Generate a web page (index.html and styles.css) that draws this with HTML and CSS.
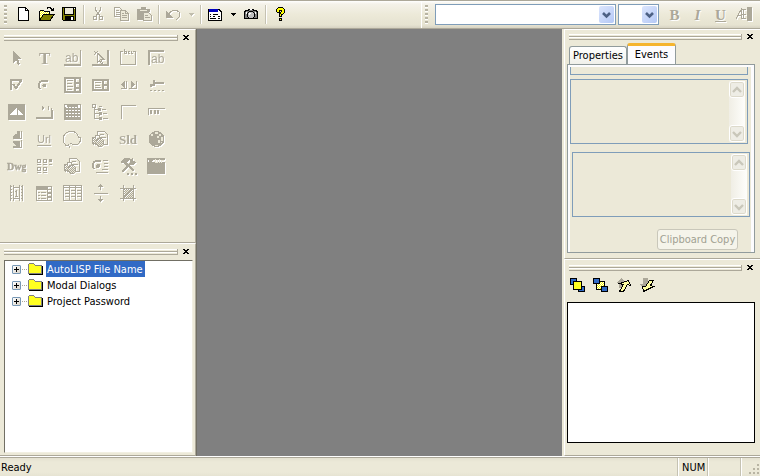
FILE: index.html
```html
<!DOCTYPE html>
<html lang="en">
<head>
<meta charset="utf-8">
<title>Dialog Editor</title>
<link rel="stylesheet" href="styles.css">
</head>
<body>
<svg class="defs" aria-hidden="true">
  <defs>
    <pattern id="dither" width="2" height="2" patternUnits="userSpaceOnUse"><path fill="#ff0" d="M0 0h2v2H0z"/><path fill="#fff" d="M0 0h1v1H0zM1 1h1v1H1z"/></pattern>
    <pattern id="mesh" width="2" height="2" patternUnits="userSpaceOnUse"><path fill="#aca899" d="M0 0h1v1H0zM1 1h1v1H1z"/></pattern>
    <symbol id="close" viewBox="0 0 8 7"><path d="M1 1h2v1h2V1h2v1H6v1H5v1h1v1h1v1H5V5H3v1H1V5h1V4h1V3H2V2H1z"/></symbol>
    <symbol id="up" viewBox="0 0 10 8"><path d="M1 6 5 2 9 6" fill="none" stroke="#c9c7ba" stroke-width="2.4"/></symbol>
    <symbol id="down" viewBox="0 0 10 8"><path d="M1 2 5 6 9 2" fill="none" stroke="#c9c7ba" stroke-width="2.4"/></symbol>
    <symbol id="folder" viewBox="0 0 16 14"><path d="M0.500 11.500V2.500L1.500 1.500H5.500L7.500 3.500H13.500V11.500Z" fill="#ffff20" stroke="#808080"/><path d="M1 12.500H14.500V4" fill="none" stroke="#000"/></symbol>
    <symbol id="caret" viewBox="0 0 5 3"><path d="M0 0h5v1H4v1H3v1H2V2H1V1H0z"/></symbol>
    <symbol id="prints" viewBox="0 0 20 20"><path class="l" d="M7.500 7V2.500H14.500L17.500 5.500V15.500H14M10 5.500h4M12 8.500h4"/><path fill="url(#mesh)" d="M2 9h11v7H2z"/><path class="l" d="M2.500 14V8.500H5L6 6.500H9L10 8.500H13.500M3 14.500H6"/><circle class="l" cx="10" cy="13.500" r="4" style="fill:url(#mesh)"/></symbol>
  </defs>
</svg>

<header class="toolbars">
  <div class="toolbar" role="toolbar" aria-label="Standard">
    <span class="grip"></span>
    <button class="tool" aria-label="New"><svg viewBox="0 0 17 16"><path d="M3.500 1.500H10.500L13.500 4.500V14.500H3.500Z" fill="#fff" stroke="#000"/><path d="M10.500 1.500V4.500H13.500" fill="none" stroke="#000"/></svg></button>
    <button class="tool" aria-label="Open"><svg viewBox="0 0 17 16"><path d="M1.500 14V5.500L2.500 4.500H5.500L6.500 5.500H11.500V8" fill="url(#dither)" stroke="#000"/><path d="M1.500 14.500 5.500 8.500H16L12 14.500Z" fill="#808000" stroke="#000"/><path d="M9 2.500 10 1.500H12L14.500 4M15.500 2V4.500H13" fill="none" stroke="#000"/></svg></button>
    <button class="tool" aria-label="Save"><svg viewBox="0 0 17 16"><path d="M1.500 1.500H14.500V14.500H2.500L1.500 13.500Z" fill="#808000" stroke="#000"/><path fill="#ece9d8" d="M4 2h8v6H4z"/><path d="M3.500 1.500V8.500H12.500V1.500" fill="none" stroke="#000"/><path d="M4 10h9v5H4z"/><path fill="#fff" d="M10 11h2v3h-2zM13 2h1v1h-1z"/></svg></button>
    <span class="sep"></span>
    <button class="tool off" disabled aria-label="Cut"><svg viewBox="0 0 17 16"><path class="l" d="M5.500 1V4L10 10M10.500 1V4L6 10"/><circle class="l" cx="5" cy="12" r="2"/><circle class="l" cx="11" cy="12" r="2"/></svg></button>
    <button class="tool off" disabled aria-label="Copy"><svg viewBox="0 0 17 16"><path class="l" d="M1.500 1.500H6.500L9.500 4.500V10.500H1.500ZM3 4.500H6M3 6.500H7M3 8.500H7"/><path d="M7.500 4.500H12.500L15.500 7.500V14.500H7.500Z" fill="#ece9d8" stroke="#aca899"/><path class="l" d="M12.500 5V7.500H15M9 7.500H11M9 9.500H14M9 11.500H14"/></svg></button>
    <button class="tool off" disabled aria-label="Paste"><svg viewBox="0 0 17 16"><path class="f" d="M1 3h4V1h5v2h4v3h-5v8H1z"/><path d="M4 4.500H11" stroke="#ece9d8"/><path d="M7.500 6.500H12.500L15.500 9.500V14.500H7.500Z" fill="#ece9d8" stroke="#aca899"/><path class="l" d="M9 9.500H12M9 11.500H14"/></svg></button>
    <span class="sep"></span>
    <button class="tool off" disabled aria-label="Undo"><svg viewBox="0 0 17 16"><path class="l" d="M3 9.500C5 4 11 3 14 6C16.500 9 14 12 11 13.500"/><path class="f" d="M1 5v7h7z"/></svg></button>
    <button class="drop off" disabled aria-label="Undo list"><svg><use href="#caret"/></svg></button>
    <span class="sep"></span>
    <button class="tool" aria-label="Dialog properties"><svg viewBox="0 0 17 16"><path d="M1.500 3.500H12L14.500 6V14.500H1.500Z" fill="#fff" stroke="#000"/><path fill="#0000c0" d="M2 3h9v3H2z"/><path d="M3 8.500H4M6 8.500H11M3 10.500H4M6 10.500H8M3 12.500H9M11 10.500H13M11 12.500H13" stroke="#000"/></svg></button>
    <button class="drop" aria-label="Dialog list"><svg><use href="#caret"/></svg></button>
    <button class="tool" aria-label="Preview"><svg viewBox="0 0 17 16"><path d="M1.500 5.500 3.500 4.500H5.500V3.500H10.500V4.500H12.500L14.500 5.500V12.500H1.500Z" fill="#808080" stroke="#000"/><circle cx="8" cy="9" r="3.500" fill="#c0c0c0" stroke="#000"/><path fill="#fff" d="M6 7h2v1H7v1H6zM3 6h1v2H3zM12 6h1v2h-1zM7 3h2v1H7z"/></svg></button>
    <span class="sep"></span>
    <button class="tool" aria-label="Help"><svg viewBox="0 0 17 16"><path d="M4.500 5V3.500L6.500 1.500H10.500L12.500 3.500V6.500L9.500 9V10.500H7.500V8L9.500 5.500V4.500H7.500V6.500H5.500ZM7.500 12.500H9.500V14.500H7.500Z" fill="#ff0" stroke="#000"/></svg></button>
  </div>
  <div class="toolbar font-bar" role="toolbar" aria-label="Font">
    <span class="grip"></span>
    <span class="combo wide"><select aria-label="Font name"><option></option></select><svg viewBox="0 0 15 17"><path d="m4 7 3.500 3.500L11 7" fill="none" stroke="#4d6185" stroke-width="2.600"/></svg></span>
    <span class="combo"><select aria-label="Font size"><option></option></select><svg viewBox="0 0 15 17"><path d="m4 7 3.500 3.500L11 7" fill="none" stroke="#4d6185" stroke-width="2.600"/></svg></span>
    <button class="tool off letter" disabled>B</button>
    <button class="tool off letter italic" disabled>I</button>
    <button class="tool off letter under" disabled>U</button>
    <button class="tool off" disabled aria-label="Text width"><svg viewBox="0 0 17 16"><path class="l" d="M1 12.500 6.500 3V12.500M3 9.500H7M6 3.500H11M8.500 3V13M7 8.500H11M7 12.500H11"/><path class="f" d="M12 1h5v14h-5z"/></svg></button>
  </div>
</header>

<main class="work">
  <aside class="dock left">
    <section class="panel tools" aria-label="Controls">
      <div class="caption"><span class="bars"></span><button class="close" aria-label="Close controls"><svg><use href="#close"/></svg></button></div>
      <div class="palette">
        <button disabled aria-label="Select"><svg viewBox="0 0 20 20"><path class="f" d="M7 3 15 11H12L14 16 12 17 10 12 7 15Z"/></svg></button>
        <button disabled aria-label="Label"><svg viewBox="0 0 20 20"><text x="5" y="16" font-size="17" class="serif">T</text></svg></button>
        <button disabled aria-label="Text box"><svg viewBox="0 0 20 20"><path class="f" d="M18 2h1v16H2v-2h16z"/><text x="3" y="14" font-size="12">ab</text></svg></button>
        <button disabled aria-label="Text button"><svg viewBox="0 0 20 20"><path class="f" d="M17 2h2v16H2v-2h15z"/><path class="l" d="M7.500 5V14.500L9.500 12.500 11.500 16 12.500 15.500 11 11.500H14L7.500 5M4 3l2 2M8 3 4 7"/></svg></button>
        <button disabled aria-label="Frame"><svg viewBox="0 0 20 20"><path class="l" d="M5 3.500H2.500V16.500H17.500V3.500H15M6.500 1V5.500H8.500V3.500H7M10.500 5V3.500H12M10 5.500H12M14 3.500H13.500V5.500H15"/></svg></button>
        <button disabled aria-label="Edit box"><svg viewBox="0 0 20 20"><path class="f" d="M2 2h16v2H4v13H2z"/><text x="5" y="15" font-size="12">ab</text></svg></button>

        <button disabled aria-label="Check box"><svg viewBox="0 0 20 20"><path class="f" d="M4 4h12v2H6v9H4z"/><path class="l t" d="m7 9 3 4 5-7"/></svg></button>
        <button disabled aria-label="Option button"><svg viewBox="0 0 20 20"><path class="l t" d="M6 14C3 9 6 4 14 6"/><circle class="f" cx="10.500" cy="10.500" r="2"/></svg></button>
        <button disabled aria-label="List box"><svg viewBox="0 0 20 20"><path class="l t" d="M3 3H18V17H3ZM13 3V17M13 8H18M13 13H18"/><path class="l" d="M5 5.500h6M5 8.500h5M5 11.500h6M5 14.500h5"/></svg></button>
        <button disabled aria-label="Combo box"><svg viewBox="0 0 20 20"><path class="l t" d="M3 5H18V15H3ZM13 5V15M13 10H18"/><path class="l" d="M5 7.500h6M5 10.500h5M5 12.500h6"/></svg></button>
        <button disabled aria-label="Scroll bar"><svg viewBox="0 0 20 20"><path class="f" d="M7 6v7L3 9.500zM13 6v7l4-3.500z"/><path class="l" d="M3 13.500H8.500V6M11 13.500H18.500V6"/></svg></button>
        <button disabled aria-label="Slider"><svg viewBox="0 0 20 20"><path class="f" d="M7 5h2v2h9v2H9v2H6V9H6v3H4V9h3zM4 15h2v1H4zM8 15h2v1H8zM12 15h2v1h-2zM16 15h2v1h-2z"/></svg></button>

        <button disabled aria-label="Picture"><svg viewBox="0 0 20 20"><path class="f" d="M2 2h17v16H2z"/><path fill="#fff" d="M11 5v8H4zM12 7l5 6h-5z"/></svg></button>
        <button disabled aria-label="Groove"><svg viewBox="0 0 20 20"><path class="l t" d="M2 16H18V8"/><path class="f" d="M8 4l3 2-3 2zM14 4h1v4h-1zM17 6h1v4h-1z"/></svg></button>
        <button disabled aria-label="Grid"><svg viewBox="0 0 20 20"><path class="f" d="M2 2h17v16H2z"/><path d="M4 5.500h14M4 8.500h14M4 11.500h14M4 14.500h14" stroke="#fff" stroke-dasharray="2 1"/><path fill="#fff" d="M3 3h2v2H3zM16 3h2v2h-2z"/></svg></button>
        <button disabled aria-label="Tree"><svg viewBox="0 0 20 20"><path class="l" d="M4.500 5V16.500H9M5 7.500H9M5 11.500H9M9 4.500H12M12 7.500H16M13 11.500H17M13 16.500H18M2.500 2.500h3v3h-3zM9.500 13.500v-3"/><path class="f" d="M8 6h3v3H8zM9 10h3v3H9zM9 15h3v3H9z"/></svg></button>
        <button disabled aria-label="Corner"><svg viewBox="0 0 20 20"><path class="l" d="M3.500 17V3.500H18"/></svg></button>
        <button disabled aria-label="Progress bar"><svg viewBox="0 0 20 20"><path class="l" d="M2.500 13V6.500H19"/><path class="f" d="M4 8h2v4H4zM8 8h2v4H8zM11 8h2v4h-2z"/></svg></button>

        <button disabled aria-label="Spin button"><svg viewBox="0 0 20 20"><path class="f" d="M11 2h3v7H7V7l2-2h2zM7 12h7v6H7v-1h3l-3-3z"/><path class="l" d="M15.500 2V9.500H7M15.500 11V18.500H7"/></svg></button>
        <button disabled aria-label="Link"><svg viewBox="0 0 20 20"><text x="3" y="14" font-size="11">Url</text><path class="l" d="M3 16.500H17"/></svg></button>
        <button disabled aria-label="Shape"><svg viewBox="0 0 20 20"><path class="l" d="M7 16.500H4L1.500 13V7L4.500 3.500 7 2.500H12L15.500 5.500 16.500 8H18.500V12L15.500 15.500H11L8.500 14M6 15.500 8 18.500"/></svg></button>
        <button disabled aria-label="Image list"><svg><use href="#prints"/></svg></button>
        <button disabled aria-label="Slide"><svg viewBox="0 0 20 20"><text x="1" y="15" font-size="13" class="serif">Sld</text></svg></button>
        <button disabled aria-label="Web"><svg viewBox="0 0 20 20"><circle class="f" cx="10.500" cy="10" r="8"/><path fill="#ece9d8" d="M9 3h3v2H9zM13 5h2v2h-2zM11 7h2v2h-2zM15 8h2v4h-2zM12 11h2v3h-2zM5 5h2v2H5zM9 16h3v1H9zM15 13h1v1h-1z"/></svg></button>

        <button disabled aria-label="Drawing"><svg viewBox="0 0 20 20"><text x="1" y="14" font-size="10" class="serif slab">Dwg</text></svg></button>
        <button disabled aria-label="Icon view"><svg viewBox="0 0 20 20"><path class="l" d="M3.500 3.500h3v3h-3zM9.500 3.500h3v3h-3zM3.500 11.500h3v3h-3zM9.500 11.500h3v3h-3zM3 8.500h4M9 8.500h4M15 8.500h3M3 16.500h4M9 16.500h4"/><path class="f" d="M15 3h3v3h-3z"/></svg></button>
        <button disabled aria-label="Image box"><svg><use href="#prints"/></svg></button>
        <button disabled aria-label="Option list"><svg viewBox="0 0 20 20"><path class="l t" d="M4 13C1 8 4 3 11 5"/><circle class="f" cx="8" cy="10" r="2"/><path class="l" d="M13 4.500h5M14 7.500h4M14 10.500h4M12 13.500h6M6 16.500h12"/></svg></button>
        <button disabled aria-label="Custom"><svg viewBox="0 0 20 20"><path class="l t" d="M4 16 15 5M7 6 16 15"/><path class="f" d="M3 5l4-3h5v2L9 6l1 2-2 2-3-3H3zM12 3l3-1v3l3 1-2 3h-3zM9 17h2v2H9zM13 17h2v2h-2zM17 17h2v2h-2z"/></svg></button>
        <button disabled aria-label="Directory"><svg viewBox="0 0 20 20"><path class="f" d="M1 2h18v2H7L6 6H3V4H2v2h17v12H1z"/><path d="M9.500 3V6M11 3.500V6.500H9M13.500 3V7M15.500 7V4.500H18" fill="none" stroke="#ece9d8"/></svg></button>

        <button disabled aria-label="Animation"><svg viewBox="0 0 20 20"><path class="l" d="M4.500 2V18M7.500 2V18M13.500 2V18M16.500 2V18M8 4.500h5M8 15.500h5M9 8.500h2M10.500 7V13M9 13.500h3"/><path class="l" stroke-dasharray="1 2" d="M5.500 3V18M15.500 3V18"/></svg></button>
        <button disabled aria-label="List view"><svg viewBox="0 0 20 20"><path class="l" d="M2.500 3.500H17.500V17.500H2.500ZM3 6.500H17M13.500 4V17M4 9.500h2M7 9.500h5M4 12.500h2M7 12.500h5M4 15.500h2M7 15.500h5"/><path class="f" d="M3 4h10v2H3zM14 9h3v2h-3zM14 13h3v2h-3z"/></svg></button>
        <button disabled aria-label="Data grid"><svg viewBox="0 0 20 20"><path class="l" d="M1.500 2.500H19.500V17.500H1.500ZM2 4.500H19M7.500 3V17M13.500 3V17M3 7.500h4M9 7.500h4M15 7.500h4M3 10.500h4M9 10.500h4M15 10.500h4M3 13.500h4M9 13.500h4M15 13.500h4"/></svg></button>
        <button disabled aria-label="Splitter"><svg viewBox="0 0 20 20"><path class="l" d="M4 10.500H18M10.500 1V7M10.500 13V19M8 3.500H13M8 16.500H13M9 2.500h3M9 17.500h3"/></svg></button>
        <button disabled aria-label="Hatch"><svg viewBox="0 0 20 20"><path fill="url(#mesh)" d="M5 5h11v10H5z"/><path class="l" d="M2 5.500H18M2 15.500H18M5.500 2V18M15.500 2V18M6 9l3-3M6 14l9-9M10 15l5-5"/></svg></button>
      </div>
    </section>
    <section class="panel project" aria-label="Project">
      <div class="caption"><span class="bars"></span><button class="close" aria-label="Close project"><svg><use href="#close"/></svg></button></div>
      <ul class="tree">
        <li><button class="plus" aria-label="Expand AutoLISP File Name"></button><i class="dots"></i><svg class="folder"><use href="#folder"/></svg><span class="name picked">AutoLISP File Name</span></li>
        <li><button class="plus" aria-label="Expand Modal Dialogs"></button><i class="dots"></i><svg class="folder"><use href="#folder"/></svg><span class="name">Modal Dialogs</span></li>
        <li><button class="plus" aria-label="Expand Project Password"></button><i class="dots"></i><svg class="folder"><use href="#folder"/></svg><span class="name">Project Password</span></li>
      </ul>
    </section>
  </aside>

  <div class="canvas"></div>

  <aside class="dock right">
    <section class="panel inspector" aria-label="Inspector">
      <div class="caption"><span class="bars"></span><button class="close" aria-label="Close inspector"><svg><use href="#close"/></svg></button></div>
      <div class="tabs" role="tablist">
        <button class="tab" role="tab" aria-selected="false">Properties</button>
        <button class="tab current" role="tab" aria-selected="true">Events</button>
      </div>
      <div class="page" role="tabpanel">
        <div class="field cut"></div>
        <div class="field"><textarea disabled aria-label="Event description"></textarea><span class="scroll"><button disabled aria-label="Scroll up"><svg><use href="#up"/></svg></button><button disabled aria-label="Scroll down"><svg><use href="#down"/></svg></button></span></div>
        <div class="field shifted"><textarea disabled aria-label="Event code"></textarea><span class="scroll"><button disabled aria-label="Scroll up"><svg><use href="#up"/></svg></button><button disabled aria-label="Scroll down"><svg><use href="#down"/></svg></button></span></div>
        <button class="push" disabled>Clipboard Copy</button>
      </div>
    </section>
    <section class="panel order" aria-label="Z order">
      <div class="caption"><span class="bars"></span><button class="close" aria-label="Close order"><svg><use href="#close"/></svg></button></div>
      <div class="order-tools">
        <button class="tool" aria-label="Bring to front"><svg viewBox="0 0 17 16"><path d="M1.500 1.500h6v6h-6zM9.500 9.500h6v5h-6z" fill="#316ac5" stroke="#000"/><path d="M4.500 4.500h8v8h-8z" fill="#ffff20" stroke="#000"/></svg></button>
        <button class="tool" aria-label="Send to back"><svg viewBox="0 0 17 16"><path d="M4.500 4.500h8v8h-8z" fill="url(#dither)" stroke="#000"/><path d="M1.500 1.500h6v5h-6zM9.500 9.500h6v5h-6z" fill="#316ac5" stroke="#000"/></svg></button>
        <button class="tool" aria-label="Move up"><svg viewBox="0 0 17 16"><path class="f" d="M1 6 6 1l5 5H8v5H4V6z"/><path d="M4.500 6.500 13.500 3.500 15.500 8.500 12.500 7.500 8.500 14.500H4.500L8.500 7.500Z" fill="#ffffa0" stroke="#000"/></svg></button>
        <button class="tool" aria-label="Move down"><svg viewBox="0 0 17 16"><path class="f" d="M5 1h5v6h3l-6 6-6-6h4z"/><path d="M11.500 3.500H15.500L12.500 8.500 15.500 9.500 5.500 14.500 4.500 9.500 7.500 9.500Z" fill="#ffffa0" stroke="#000"/></svg></button>
      </div>
      <div class="order-list"></div>
    </section>
  </aside>
</main>

<footer class="status">
  <span class="message">Ready</span>
  <span class="cell num">NUM</span>
  <span class="cell blank"></span>
  <span class="cell sizer"><svg viewBox="0 0 12 12"><path fill="#b8b4a3" d="M9 1h2v2H9zM5 5h2v2H5zM9 5h2v2H9zM1 9h2v2H1zM5 9h2v2H5zM9 9h2v2H9z"/></svg></span>
</footer>
</body>
</html>
```

FILE: styles.css
```css
:root {
  --face: #ece9d8;
  --shade: #aca899;
  --field: #7f9db9;
}

* { box-sizing: border-box; }

body {
  margin: 0;
  height: 100vh;
  display: flex;
  flex-direction: column;
  overflow: hidden;
  background: var(--face);
  color: #000;
  font: 11px/16px "DejaVu Sans Condensed", "Noto Sans", sans-serif;
}

button, select, textarea {
  font: inherit;
  margin: 0;
  padding: 0;
  border: 0;
  border-radius: 0;
  background: none;
  color: inherit;
}

svg { display: block; shape-rendering: crispEdges; }
.defs { position: absolute; width: 0; height: 0; }
.f { fill: var(--shade); }
.l { fill: none; stroke: var(--shade); }
.t { stroke-width: 2; }

/* toolbars */
.toolbars {
  flex: none;
  height: 29px;
  display: flex;
  border-top: 1px solid var(--shade);
  border-bottom: 1px solid var(--shade);
  background: linear-gradient(#fff 0, #f4f2e9 3px, var(--face) 14px, #e6e3d1 24px, #d6d2c2);
}
.toolbar { display: flex; align-items: center; padding-left: 4px; }
.toolbar:first-child { flex: 1; }
.font-bar { width: 339px; padding-left: 3px; border-left: 1px solid #fff; }
.grip {
  width: 3px;
  height: 19px;
  margin-right: 5px;
  background: repeating-linear-gradient(#b8b4a3 0 2px, #fff 2px 3px, transparent 3px 4px);
}
.tool { width: 23px; height: 22px; padding: 2px 3px 4px; flex: none; }
.tool svg { width: 17px; height: 16px; }
.drop { width: 13px; height: 22px; padding: 0 4px; }
.drop svg { width: 5px; height: 3px; }
.sep { width: 6px; height: 19px; border-left: 2px solid transparent; background: linear-gradient(90deg, #c5c2b2 1px, #fff 1px 2px, transparent 2px) padding-box no-repeat; }
.off svg, .palette svg { filter: drop-shadow(1px 1px 0 #fff); }
.drop.off svg { fill: #c0bdad; }
.combo {
  display: flex;
  position: relative;
  width: 41px;
  height: 21px;
  margin: 0 4px 0 2px;
  border: 1px solid var(--field);
  background: #fff;
}
.combo.wide { width: 181px; margin: 0 0 0 2px; }
.combo select { appearance: none; width: 100%; }
.combo svg {
  position: absolute;
  right: 1px;
  top: 1px;
  width: 15px;
  height: 17px;
  border-radius: 2px;
  background: linear-gradient(135deg, #dce6fd, #b4c8f6);
  pointer-events: none;
  shape-rendering: auto;
}
.letter {
  padding: 0;
  color: var(--shade);
  text-shadow: 1px 1px 0 #fff;
  font: bold 15px/20px "Liberation Serif", serif;
}
.italic { font-style: italic; }
.under { text-decoration: underline; }

/* docks */
.work { flex: 1; min-height: 0; display: flex; border-bottom: 1px solid #fff; }
.dock { display: flex; flex-direction: column; width: 197px; flex: none; }
.canvas { flex: 1; background: #808080; }
.left { border-right: 1px solid #716f64; }
.right { width: 198px; border-left: 2px solid var(--face); }
.panel {
  display: flex;
  flex-direction: column;
  border-top: 1px solid #fff;
  border-bottom: 1px solid var(--shade);
}
.left .panel { border-right: 1px solid var(--shade); }
.right .panel { border-left: 1px solid #fff; padding-right: 1px; }
.tools { height: 214px; }
.inspector { height: 230px; }
.project, .order { flex: 1; min-height: 0; }
.caption { display: flex; align-items: center; gap: 4px; height: 15px; padding: 0 5px 0 4px; }
.bars {
  flex: 1;
  height: 6px;
  border-right: 1px solid var(--shade);
  background: linear-gradient(#fff 0 1px, transparent 1px 2px, var(--shade) 2px 3px, #fff 3px 4px, transparent 4px 5px, var(--shade) 5px 6px);
}
.close { width: 8px; height: 7px; }
.close svg { width: 8px; height: 7px; }

/* control palette */
.palette { display: grid; grid-template-columns: repeat(6, 28px); grid-auto-rows: 27px; padding-left: 2px; }
.palette button { padding: 3px 4px 4px; }
.palette svg { width: 20px; height: 20px; }
.palette text { fill: var(--shade); font-family: "Liberation Sans", sans-serif; }
.palette .serif { font-family: "Liberation Serif", serif; font-weight: bold; }
.palette .slab { stroke: var(--shade); stroke-width: 0.4px; }

/* project tree */
.tree {
  flex: 1;
  margin: 1px 2px 2px 4px;
  padding: 0;
  list-style: none;
  background: #fff;
  border: 1px solid;
  border-color: #716f64 #f1efe2 #f1efe2 #716f64;
}
.tree li { display: flex; align-items: center; height: 16px; padding-left: 7px; }
.plus {
  width: 9px;
  height: 9px;
  border: 1px solid #7898b5;
  border-radius: 1px;
  background:
    linear-gradient(#000, #000) center / 5px 1px no-repeat,
    linear-gradient(#000, #000) center / 1px 5px no-repeat,
    linear-gradient(135deg, #fff, #d8d3c8);
}
.dots { width: 7px; height: 1px; background: repeating-linear-gradient(90deg, transparent 0 1px, #aca899 1px 2px); }
.folder { width: 16px; height: 14px; margin-right: 2px; }
.name { height: 16px; padding: 0 2px 0 1px; line-height: 17px; }
.picked { background: #316ac5; color: #fff; }

/* inspector */
.tabs { display: flex; align-items: flex-end; height: 22px; padding-left: 4px; }
.tab {
  height: 18px;
  width: 58px;
  border: 1px solid #919b9c;
  border-bottom: 0;
  border-radius: 3px 3px 0 0;
  background: linear-gradient(#fff, #f0f0ea);
  line-height: 18px;
}
.tab.current {
  width: 49px;
  height: 21px;
  padding-bottom: 2px;
  border-top: 3px solid #f5b52e;
  background: #fcfcfe;
}
.page {
  flex: 1;
  display: flex;
  flex-direction: column;
  margin: 0 4px 5px 2px;
  padding: 0 4px 2px 0;
  border: 1px solid #919b9c;
  box-shadow: inset 2px 2px 0 #fcfcfe, inset -3px 0 0 #fcfcfe;
}
.field {
  display: flex;
  width: 178px;
  height: 65px;
  margin: 0 0 8px 2px;
  border: 1px solid var(--field);
}
.field.cut { height: 8px; margin: 2px 0 4px 2px; border-top: 0; }
.field.shifted { margin: 0 0 12px 4px; }
.field textarea { flex: 1; min-width: 0; resize: none; }
.scroll {
  display: flex;
  flex-direction: column;
  justify-content: space-between;
  width: 16px;
  margin: 1px 2px;
  background: linear-gradient(90deg, #f0eee5, #fefefb);
}
.scroll button {
  height: 17px;
  padding: 4px 2px;
  border: 1px solid #fff;
  border-radius: 3px;
  background: #eeede5;
  box-shadow: inset 0 0 0 1px #dddacb;
}
.scroll svg { width: 10px; height: 8px; shape-rendering: auto; }
.push {
  align-self: flex-end;
  width: 81px;
  height: 21px;
  margin-right: 12px;
  border: 1px solid #c9c7ba;
  border-radius: 3px;
  background: #f5f4ea;
  color: #a1a192;
}

/* order panel */
.order-tools { display: flex; height: 27px; align-items: flex-start; padding-left: 1px; }
.order-list { flex: 1; margin: 0 4px 12px 2px; border: 1px solid #000; background: #fff; }

/* status bar */
.status {
  flex: none;
  display: flex;
  height: 19px;
  border-top: 1px solid var(--shade);
  background: linear-gradient(#e4e1d0, var(--face) 4px, var(--face) 14px, #e6e3d2);
  line-height: 20px;
}
.message { flex: 1; padding-left: 1px; }
.cell { border-left: 1px solid #c5c2b2; box-shadow: inset 1px 0 0 #fff; padding-left: 4px; }
.num { width: 30px; }
.blank { width: 33px; }
.sizer { width: 20px; padding: 5px 0 0 7px; }
.sizer svg { width: 12px; height: 12px; }
```
